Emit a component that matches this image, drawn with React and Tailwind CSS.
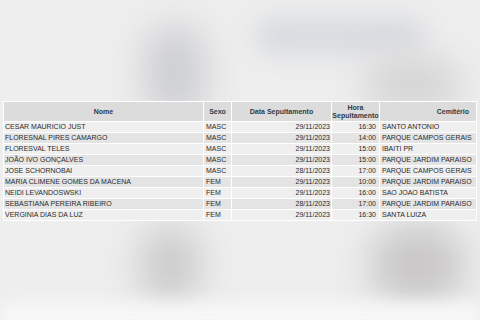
import React from "react";

const rows = [
  ["CESAR MAURICIO JUST", "MASC", "29/11/2023", "16:30", "SANTO ANTONIO"],
  ["FLORESNAL PIRES CAMARGO", "MASC", "29/11/2023", "14:00", "PARQUE CAMPOS GERAIS"],
  ["FLORESVAL TELES", "MASC", "29/11/2023", "15:00", "IBAITI PR"],
  ["JOÃO IVO GONÇALVES", "MASC", "29/11/2023", "15:00", "PARQUE JARDIM PARAISO"],
  ["JOSE SCHORNOBAI", "MASC", "28/11/2023", "17:00", "PARQUE CAMPOS GERAIS"],
  ["MARIA CLIMENE GOMES DA MACENA", "FEM", "29/11/2023", "10:00", "PARQUE JARDIM PARAISO"],
  ["NEIDI LEVANDOSWSKI", "FEM", "29/11/2023", "16:00", "SAO JOAO BATISTA"],
  ["SEBASTIANA PEREIRA RIBEIRO", "FEM", "28/11/2023", "17:00", "PARQUE JARDIM PARAISO"],
  ["VERGINIA DIAS DA LUZ", "FEM", "29/11/2023", "16:30", "SANTA LUIZA"],
];

export default function App() {
  return (
    <div
      className="relative w-[480px] h-[320px] overflow-hidden bg-[#eeeeee]"
      style={{ fontFamily: '"Liberation Sans", Arial, sans-serif' }}
    >
      <div className="absolute left-[145px] top-[25px] w-[60px] h-[95px] rounded-full bg-[#cdced2] blur-[18px]" />
      <div className="absolute left-[255px] top-[20px] w-[170px] h-[32px] rounded-full bg-[#d4d7dd] blur-[14px]" />
      <div className="absolute left-[365px] top-[60px] w-[95px] h-[50px] rounded-full bg-[#d4d2d2] blur-[18px]" />
      <div className="absolute left-[140px] top-[225px] w-[60px] h-[80px] rounded-full bg-[#cbcbcb] blur-[18px]" />
      <div className="absolute left-[370px] top-[225px] w-[95px] h-[80px] rounded-full bg-[#c9c7c7] blur-[18px]" />
      <div className="absolute left-0 top-[302px] w-[480px] h-[30px] bg-[#f7f7f7] blur-[8px]" />

      <div className="relative pt-[101px] pl-[3px]">
        <table className="table-fixed w-[474px] bg-white border-separate border-spacing-[1px] text-[7px] leading-[8px] text-[#2a2a2a]">
          <colgroup>
            <col className="w-[199px]" />
            <col className="w-[27px]" />
            <col className="w-[99px]" />
            <col className="w-[47px]" />
            <col className="w-[96px]" />
          </colgroup>
          <thead>
            <tr className="h-[19px] bg-[#dcdcdc] text-[#2f3b4a] font-bold">
              <th className="p-0 text-center align-middle">Nome</th>
              <th className="p-0 text-center align-middle">Sexo</th>
              <th className="p-0 text-center align-middle">Data Sepultamento</th>
              <th className="p-0 text-center align-middle">
                Hora
                <br />
                Sepultamento
              </th>
              <th className="p-0 pr-[7px] text-right align-middle">Cemitério</th>
            </tr>
          </thead>
          <tbody>
            {rows.map((r, i) => (
              <tr
                key={i}
                className={"h-[10px] " + (i % 2 === 0 ? "bg-[#efefef]" : "bg-[#e4e4e4]")}
              >
                <td className="p-0 pl-[1px] whitespace-nowrap">{r[0]}</td>
                <td className="p-0 pl-[2px] whitespace-nowrap">{r[1]}</td>
                <td className="p-0 pr-[1px] text-right whitespace-nowrap">{r[2]}</td>
                <td className="p-0 pr-[3px] text-right whitespace-nowrap">{r[3]}</td>
                <td className="p-0 pl-[2px] whitespace-nowrap">{r[4]}</td>
              </tr>
            ))}
          </tbody>
        </table>
      </div>
    </div>
  );
}
